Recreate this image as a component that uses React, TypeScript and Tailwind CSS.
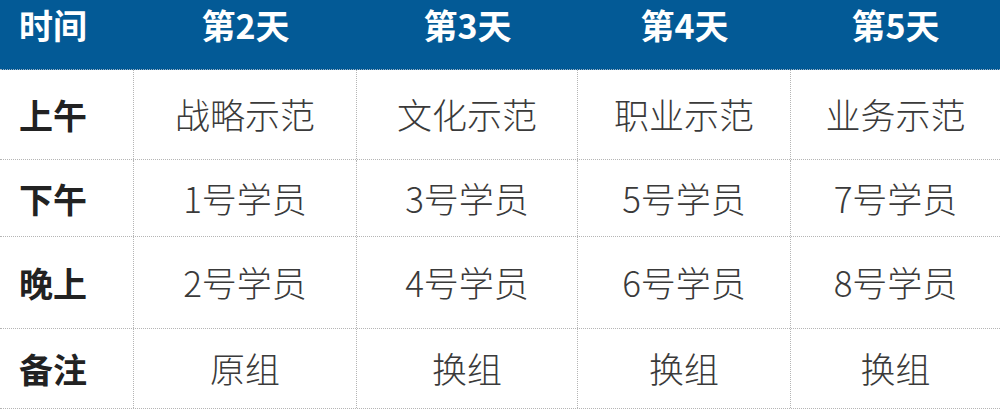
import React from "react";

const cols = ["w-[134px]", "w-[223px]", "w-[221px]", "w-[213px]", "w-[209px]"];
const header = ["时间", "第2天", "第3天", "第4天", "第5天"];
const rows: { label: string; cells: string[]; h: string }[] = [
  { label: "上午", cells: ["战略示范", "文化示范", "职业示范", "业务示范"], h: "h-[90px]" },
  { label: "下午", cells: ["1号学员", "3号学员", "5号学员", "7号学员"], h: "h-[77px]" },
  { label: "晚上", cells: ["2号学员", "4号学员", "6号学员", "8号学员"], h: "h-[92px]" },
  { label: "备注", cells: ["原组", "换组", "换组", "换组"], h: "h-[80px]" },
];

export default function App() {
  return (
    <div
      className="w-[1000px] h-[414px] bg-white overflow-hidden"
      style={{ fontFamily: '"Noto Sans CJK SC", "Noto Sans", sans-serif' }}
    >
      <div className="flex h-[70px] bg-[#035a96] border-b border-dotted border-[#9fb3c4]">
        {header.map((t, i) => (
          <div
            key={i}
            className={`${cols[i]} shrink-0 flex items-start pt-0 text-[34px] leading-[50px] font-bold text-white ${
              i === 0 ? "justify-start pl-[19px]" : "justify-center"
            }`}
          >
            {t}
          </div>
        ))}
      </div>
      {rows.map((r, ri) => (
        <div key={ri} className={`flex ${r.h} border-b border-dotted border-[#b5b5b5]`}>
          <div className={`${cols[0]} shrink-0 flex items-center pl-[19px] text-[34px] font-bold text-[#222222] border-r border-dotted border-[#b5b5b5]`}>
            {r.label}
          </div>
          {r.cells.map((c, ci) => (
            <div
              key={ci}
              className={`${cols[ci + 1]} shrink-0 flex items-center justify-center text-[35px] font-light text-[#3a3a3a] ${
                ci < 3 ? "border-r border-dotted border-[#b5b5b5]" : ""
              }`}
            >
              {c}
            </div>
          ))}
        </div>
      ))}
    </div>
  );
}
